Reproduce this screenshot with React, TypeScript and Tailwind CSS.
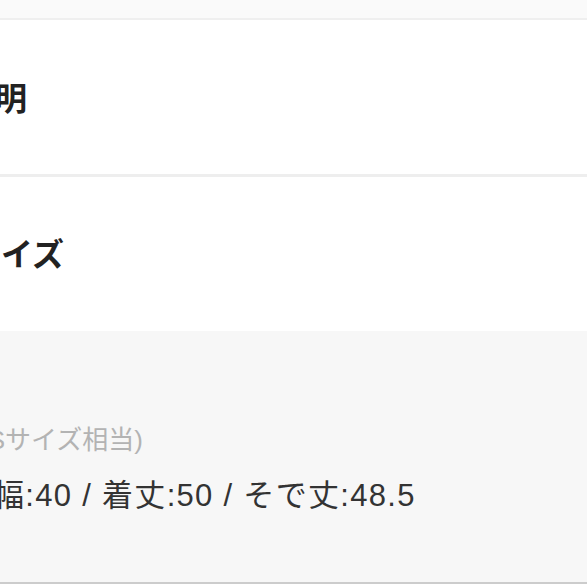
const font = "font-['Liberation_Sans','Noto_Sans_CJK_JP',sans-serif]"

export default function App() {
  return (
    <div className={`w-[587px] h-[587px] overflow-hidden bg-white ${font}`}>
      {/* top strip, previous block */}
      <div className="h-[20px] bg-[#fafafa] border-b-2 border-[#efefef]" />

      {/* 説明 row */}
      <div className="h-[157px] flex items-center pt-[4px] border-b-[3px] border-[#eeeeee] bg-white">
        <h2 className="-ml-[37px] text-[32px] font-bold text-[#222] leading-none whitespace-nowrap">
          説明
        </h2>
      </div>

      {/* サイズ row */}
      <div className="h-[154px] flex items-center pt-[2px] bg-white">
        <h2 className="-ml-[31px] text-[32px] font-bold text-[#222] leading-none whitespace-nowrap">
          サイズ
        </h2>
      </div>

      {/* size detail */}
      <div className="h-[253px] bg-[#f7f7f7] border-b-2 border-[#cccccc] flex flex-col pt-[96px]">
        <p className="-ml-[21px] text-[26px] text-[#b3b3b3] leading-none whitespace-nowrap">
          (Sサイズ相当)
        </p>
        <p className="-ml-[7px] mt-[27px] text-[31px] tracking-[1.3px] text-[#333] leading-none whitespace-nowrap">
          幅:40 / 着丈:50 / そで丈:48.5
        </p>
      </div>
    </div>
  )
}
